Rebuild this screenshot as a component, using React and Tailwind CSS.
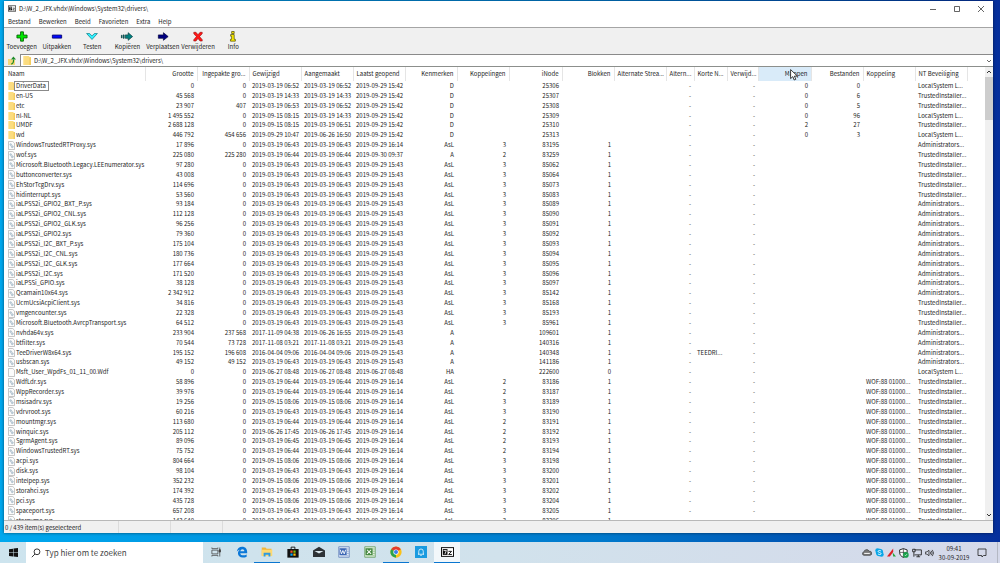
import React from "react";

const columns = [
  { label: "Naam", width: "w-[141px]", align: "text-left" },
  { label: "Grootte", width: "w-[52px]", align: "text-right" },
  { label: "Ingepakte gro...", width: "w-[52px]", align: "text-right" },
  { label: "Gewijzigd", width: "w-[52px]", align: "text-left" },
  { label: "Aangemaakt", width: "w-[52px]", align: "text-left" },
  { label: "Laatst geopend", width: "w-[52px]", align: "text-left" },
  { label: "Kenmerken", width: "w-[52px]", align: "text-right" },
  { label: "Koppelingen", width: "w-[52px]", align: "text-right" },
  { label: "iNode", width: "w-[53px]", align: "text-right" },
  { label: "Blokken", width: "w-[52px]", align: "text-right" },
  { label: "Alternate Strea...", width: "w-[52px]", align: "text-right" },
  { label: "Altern...", width: "w-[28px]", align: "text-right" },
  { label: "Korte N...", width: "w-[33px]", align: "text-left" },
  { label: "Verwijd...", width: "w-[31px]", align: "text-right" },
  { label: "Mappen", width: "w-[53px]", align: "text-right", hover: true },
  { label: "Bestanden", width: "w-[52px]", align: "text-right" },
  { label: "Koppeling", width: "w-[52px]", align: "text-left" },
  { label: "NT Beveiliging", width: "w-[52px]", align: "text-left" },
];

const L = "LocalSystem L...";
const T = "TrustedInstaller...";
const A = "Administrators...";
const W = "WOF:88 01000...";
const M43 = "2019-03-19 06:43";
const M44 = "2019-03-19 06:44";
const M45 = "2019-03-19 06:45";
const M52 = "2019-03-19 06:52";
const S06 = "2019-09-15 08:06";
const N42 = "2019-09-29 15:42";
const N43 = "2019-09-29 15:43";
const N14 = "2019-09-29 16:14";

const folder = (name, size, packed, mod, made, inode, dirs, files, nt) => ({
  kind: "folder",
  cells: [name, size, packed, mod, made, N42, "D", "", inode, "", "", "-", "", "-", dirs, files, "", nt],
});
const file = (name, size, packed, mod, made, seen, attr, links, inode, nt, extra = {}) => ({
  kind: extra.kind || "sys",
  cells: [name, size, packed, mod, made, seen, attr, links, inode, extra.blocks || "1", "", "-", extra.short || "", "-", "", "", extra.link || "", nt],
});
const wof = (name, size, date, links, inode) =>
  file(name, size, "0", date, date, N14, "AsL", links, inode, T, { link: W });
const drv = (name, size, inode, nt) => file(name, size, "0", M43, M43, N43, "AsL", "3", inode, nt);

const rows = [
  folder("DriverData", "0", "0", M52, M52, "25306", "0", "0", L),
  folder("en-US", "45 568", "0", "2019-03-19 14:33", "2019-03-19 14:33", "25307", "0", "6", T),
  folder("etc", "23 907", "407", "2019-03-19 06:53", M52, "25308", "0", "5", T),
  folder("nl-NL", "1 495 552", "0", "2019-09-15 08:15", "2019-03-19 14:33", "25309", "0", "96", L),
  folder("UMDF", "2 688 128", "0", "2019-09-15 08:15", "2019-03-19 06:51", "25310", "2", "27", T),
  folder("wd", "446 792", "454 656", "2019-09-29 10:47", "2019-06-26 16:50", "25313", "0", "3", L),
  file("WindowsTrustedRTProxy.sys", "17 896", "0", M43, M43, N14, "AsL", "3", "83195", A),
  file("wof.sys", "225 080", "225 280", M44, M44, "2019-09-30 09:37", "A", "2", "83259", T),
  drv("Microsoft.Bluetooth.Legacy.LEEnumerator.sys", "97 280", "85062", T),
  drv("buttonconverter.sys", "43 008", "85064", T),
  drv("EhStorTcgDrv.sys", "114 696", "85073", T),
  drv("hidinterrupt.sys", "53 560", "85083", T),
  drv("iaLPSS2i_GPIO2_BXT_P.sys", "93 184", "85089", A),
  drv("iaLPSS2i_GPIO2_CNL.sys", "112 128", "85090", A),
  drv("iaLPSS2i_GPIO2_GLK.sys", "96 256", "85091", A),
  drv("iaLPSS2i_GPIO2.sys", "79 360", "85092", A),
  drv("iaLPSS2i_I2C_BXT_P.sys", "175 104", "85093", A),
  drv("iaLPSS2i_I2C_CNL.sys", "180 736", "85094", A),
  drv("iaLPSS2i_I2C_GLK.sys", "177 664", "85095", A),
  drv("iaLPSS2i_I2C.sys", "171 520", "85096", A),
  drv("iaLPSSi_GPIO.sys", "38 128", "85097", A),
  drv("Qcamain10x64.sys", "2 342 912", "85142", A),
  drv("UcmUcsiAcpiClient.sys", "34 816", "85168", T),
  drv("vmgencounter.sys", "22 328", "85193", T),
  drv("Microsoft.Bluetooth.AvrcpTransport.sys", "64 512", "85961", T),
  file("nvhda64v.sys", "233 904", "237 568", "2017-11-09 04:38", "2019-06-26 16:55", N43, "A", "", "109601", A),
  file("btfilter.sys", "70 544", "73 728", "2017-11-08 03:21", "2017-11-08 03:21", N43, "A", "", "140316", A),
  file("TeeDriverW8x64.sys", "195 152", "196 608", "2016-04-04 09:06", "2016-04-04 09:06", N43, "A", "", "140348", A, { short: "TEEDRI..." }),
  file("usbscan.sys", "49 152", "49 152", M43, M43, N43, "A", "", "141186", A),
  file("Msft_User_WpdFs_01_11_00.Wdf", "0", "0", "2019-06-27 08:48", "2019-06-27 08:48", "2019-06-27 08:48", "HA", "", "222600", L, { kind: "plain", blocks: "0" }),
  wof("WdfLdr.sys", "58 896", M44, "2", "83186"),
  wof("WppRecorder.sys", "39 976", M44, "2", "83187"),
  wof("msisadrv.sys", "19 256", S06, "3", "83189"),
  wof("vdrvroot.sys", "60 216", M43, "3", "83190"),
  wof("mountmgr.sys", "113 680", M44, "2", "83191"),
  wof("winquic.sys", "205 112", "2019-06-26 17:45", "2", "83192"),
  wof("SgrmAgent.sys", "89 096", M45, "2", "83193"),
  wof("WindowsTrustedRT.sys", "75 752", M44, "2", "83194"),
  wof("acpi.sys", "804 664", S06, "3", "83198"),
  wof("disk.sys", "98 104", M43, "3", "83200"),
  wof("intelpep.sys", "352 232", S06, "3", "83201"),
  wof("storahci.sys", "174 392", M43, "3", "83202"),
  wof("pci.sys", "435 728", S06, "3", "83204"),
  wof("spaceport.sys", "657 208", M43, "3", "83205"),
  wof("stornvme.sys", "143 640", M43, "3", "83206"),
];

function Folder({ className = "h-2 w-[7px]" }) {
  return (
    <svg viewBox="0 0 7 8" className={`shrink-0 ${className}`} aria-hidden="true">
      <path d="M0 0h5.5v1H7v7H0z" fill="#fbdc7f" />
      <path d="M5.6 1H7v7H5.6z" fill="#f3cb5c" />
      <path d="M0 0h1v8H0z" fill="#ffe9a6" />
    </svg>
  );
}

function FileIcon({ gear }) {
  return (
    <svg viewBox="0 0 7 9" className="h-[9px] w-[7px] shrink-0" aria-hidden="true">
      <path d="M.5.5h4.300l1.700 1.700v6.300h-6z" fill="#fcfcfc" stroke="#a2a2a2" strokeWidth=".6" />
      {gear && (
        <g fill="#c3d3de" stroke="#9fb2c0" strokeWidth=".6">
          <circle cx="2.700" cy="3.600" r=".9" />
          <circle cx="4.300" cy="5.700" r="1" />
        </g>
      )}
    </svg>
  );
}

function SevenZip({ className }) {
  return (
    <svg viewBox="0 0 16 12" className={className} aria-hidden="true">
      <path d="M0 0h16v12H0z" fill="#111" />
      <path d="M1.200 1.200h13.600v9.600H1.200z" fill="#fff" />
      <path d="M2.200 2.400h5.800v7.200H2.200z" fill="#111" />
      <path d="M3.200 4.200h3.400L4.800 8.600" fill="none" stroke="#fff" strokeWidth="1" />
      <path d="M9.200 5.200h3.800L9.400 9H13.400" fill="none" stroke="#111" strokeWidth="1.200" />
    </svg>
  );
}

const tools = [
  ["Toevoegen", <path d="M6.300 1h3.400v3.800H14v3.400H9.700V12H6.300V8.200H2V4.800h4.300z" fill="#00e800" stroke="#075a07" />],
  ["Uitpakken", <path d="M2.500 4.800h11v3.600h-11z" fill="#0008ff" stroke="#00006a" />],
  ["Testen", <path d="M1.600 3h3.600L8 5.800 10.800 3h3.600L8 10z" fill="#30f0ff" stroke="#087880" strokeWidth=".8" />],
  ["Kopiëren", <g fill="#008080" stroke="#053c3c" strokeWidth=".8"><path d="M6 4.600h3.400V2l5.200 4.600L9.400 11V8.600H6z" /><path d="M3.400 4.600h1.200v4H3.400zM1.400 5h.6v3.200h-.6z" /></g>],
  ["Verplaatsen", <path d="M2.500 4.600h6V2l5.600 4.600L8.500 11V8.600h-6z" fill="#000080" stroke="#00003c" strokeWidth=".8" />],
  ["Verwijderen", <path d="M3 1.500h2.600L8 4.400l2.400-2.900H13v1.700L9.900 6.600l3.100 3.600v1.700h-2.600L8 8.900l-2.400 3H3v-1.700l3.100-3.600L3 3.200z" fill="#ff1818" stroke="#800" strokeWidth=".6" />],
  ["Info", <g fill="#fff000" stroke="#444000" strokeWidth=".8"><path d="M6.400.6h3V3h-3zM5.200 4.200h4.200v5.600h1.400v2.200H5v-2.200h1.400V6.200H5.200z" /></g>],
];

const taskIcons = [
  {
    name: "Taakweergave",
    art: (
      <g fill="none" stroke="#444" strokeWidth="1">
        <path d="M2.500 5.500h8v5h-8zM2.500 2v1.500h8V2M2.500 14v-1.500h8V14M13 2v12" />
        <path d="M12 5h2v3h-2z" fill="#444" />
      </g>
    ),
  },
  {
    name: "Edge",
    art: <path d="M1 7.600C1.500 3.500 4.400 1 8.200 1c4.200 0 6.700 3 6.700 7v1.500H5.700c.2 2 1.800 2.900 3.900 2.900 1.700 0 3.200-.4 4.600-1.200v3c-1.500.8-3.200 1.200-5.100 1.200-4 0-6.500-2.200-6.500-5.700 0-2 .9-3.600 2.600-4.700-1.900.4-3.200 1.300-4.200 2.600zM5.800 7h5.300c0-1.700-1-2.600-2.500-2.600S6.100 5.400 5.800 7z" fill="#0b78d8" />,
  },
  {
    name: "Verkenner",
    open: true,
    art: (
      <g>
        <path d="M1 2h5l1.500 1.500H14V13H1z" fill="#f0b73c" />
        <path d="M1 5h14v8.500H1z" fill="#ffd970" />
        <path d="M3.500 9h9v5H10v-2.500H6V14H3.500z" fill="#2f9ae0" />
      </g>
    ),
  },
  {
    name: "Store",
    art: (
      <g>
        <path d="M5.500 4V1.500h5V4" fill="none" stroke="#111" strokeWidth="1.200" />
        <path d="M.5 4h15v11.500H.5z" fill="#111" />
        <path d="M4.500 6h3v3h-3z" fill="#f35325" />
        <path d="M8.500 6h3v3h-3z" fill="#81bc06" />
        <path d="M4.500 10h3v3h-3z" fill="#05a6f0" />
        <path d="M8.500 10h3v3h-3z" fill="#ffba08" />
      </g>
    ),
  },
  {
    name: "Mail",
    art: (
      <g>
        <path d="M0 6l8-5 8 5v8.500H0z" fill="#2d3236" />
        <path d="M2 6.500h12L8 10z" fill="#dbe8ee" />
      </g>
    ),
  },
  {
    name: "Word",
    art: (
      <g>
        <path d="M1 1h14v14H1z" fill="#dfe9f8" stroke="#5b7ab5" />
        <path d="M12 4h2.500M12 7h2.500M12 10h2.500M3 13h11" stroke="#8aa4d0" />
        <path d="M2 3h9.500v9H2z" fill="#3c66b4" />
        <path d="M3 5l1.600 5.500L6.500 6l1.800 4.500L10.200 5" fill="none" stroke="#fff" strokeWidth="1.200" />
      </g>
    ),
  },
  {
    name: "Excel",
    art: (
      <g>
        <path d="M1 1h14v14H1z" fill="#e0f0dc" stroke="#5c9656" />
        <path d="M12 4h2.500M12 7h2.500M12 10h2.500M3 13h11" stroke="#8dbb86" />
        <path d="M2 3h9.500v9H2z" fill="#44883f" />
        <path d="M4 5l5.500 5.500M9.500 5L4 10.500" fill="none" stroke="#fff" strokeWidth="1.400" />
      </g>
    ),
  },
  {
    name: "Chrome",
    open: true,
    art: (
      <g>
        <circle cx="8" cy="8" r="7.500" fill="#fbc116" />
        <path d="M8 8L1.500 4.300A7.500 7.500 0 0 1 14.500 4.300z" fill="#e33b2e" />
        <path d="M8 8L1.500 4.300A7.500 7.500 0 0 0 8 15.500z" fill="#2ba24c" />
        <circle cx="8" cy="8" r="3.500" fill="#fff" />
        <circle cx="8" cy="8" r="2.700" fill="#3b7ded" />
      </g>
    ),
  },
  {
    name: "Meldingen",
    art: (
      <g>
        <path d="M0 0h16v16H0z" fill="#1a9be0" />
        <path d="M5 10.500V7a3 3 0 0 1 6 0v3.500l1 .5H4zM7 12.500h2" fill="none" stroke="#fff" />
      </g>
    ),
  },
];

function Tray() {
  return (
    <div className="flex items-center gap-[3px]">
      <svg viewBox="0 0 16 14" className="h-[9px] w-[10px]" aria-hidden="true">
        <path d="M3 11.500a2.800 2.800 0 0 1 0-5.500 4.500 4.500 0 0 1 8.500-1A3.300 3.300 0 0 1 13 11.500z" fill="#777" stroke="#333" />
        <path d="M3.500 8.500h9" stroke="#eee" strokeWidth="1.800" />
      </svg>
      <svg viewBox="0 0 16 16" className="h-[9px] w-[9px]" aria-hidden="true">
        <circle cx="8" cy="8" r="6.500" fill="#09a6e8" />
        <circle cx="4.500" cy="4.500" r="4" fill="#09a6e8" />
        <circle cx="11.500" cy="11.500" r="4" fill="#09a6e8" />
        <path d="M10.800 5.500C9.500 4 5.500 4 5.500 6.200S10.800 7.600 10.800 10 6.300 12 5.200 10.200" fill="none" stroke="#fff" strokeWidth="1.600" />
      </svg>
      <svg viewBox="0 0 16 16" className="h-[9px] w-[9px]" aria-hidden="true">
        <path d="M0 15L11 1v6L5 15z" fill="#e01f26" />
        <path d="M10 8l6 7h-5z" fill="#26a33c" />
      </svg>
      <svg viewBox="0 0 16 16" className="h-[10px] w-[10px]" aria-hidden="true">
        <path d="M7 1l6 2v4c0 4-2.500 6.500-6 8-3.500-1.500-6-4-6-8V3z" fill="#fff" stroke="#222" strokeWidth="1.500" />
        <path d="M7 1v14M1 7h12" stroke="#222" />
        <circle cx="11" cy="11" r="4.500" fill="#18a04a" />
        <path d="M9 11l1.500 1.500L13 9.500" fill="none" stroke="#fff" />
      </svg>
      <svg viewBox="0 0 16 16" className="h-[10px] w-[10px]" fill="none" stroke="#222" strokeWidth="1.400" aria-hidden="true">
        <path d="M4 3h11v8H4M7 14h6M10 11v3M1 2h4v4H1zM3 6v8" />
      </svg>
      <svg viewBox="0 0 16 16" className="h-[10px] w-[9px]" fill="none" stroke="#222" strokeWidth="1.300" aria-hidden="true">
        <path d="M1 6h2.500L7 3v10l-3.500-3H1zM9 5.500q2 2.500 0 5M11 4q3.500 4 0 8M13 2.500q4.500 5.500 0 11" />
      </svg>
    </div>
  );
}

export default function App() {
  return (
    <div className="flex h-screen flex-col overflow-hidden bg-gradient-to-r from-[#00a8ee] via-[#0079cc] via-60% to-[#062f9c] font-['Noto_Sans_CJK_JP','Open_Sans',sans-serif] text-[6px] leading-[8px] text-[#1c1c1c]">
      <div className="mt-px mr-[7px] mb-[9px] ml-1 flex min-h-0 flex-1 flex-col bg-white shadow-[0_0_3px_#0008]">
        <header className="flex h-[15px] shrink-0 items-center pl-1">
          <SevenZip className="h-[7px] w-2" />
          <h1 className="ml-[3px] flex-1">D:\W_2_JFX.vhdx\Windows\System32\drivers\</h1>
          <div className="flex h-full">
            <button aria-label="Minimaliseren" className="grid w-6 place-items-center">
              <svg viewBox="0 0 8 8" className="h-2 w-2" stroke="#222" strokeWidth=".7"><path d="M1 4.500h6" /></svg>
            </button>
            <button aria-label="Maximaliseren" className="grid w-6 place-items-center">
              <svg viewBox="0 0 8 8" className="h-2 w-2" fill="none" stroke="#222" strokeWidth=".7"><path d="M1.500 1.500h5v5h-5z" /></svg>
            </button>
            <button aria-label="Sluiten" className="grid w-6 place-items-center">
              <svg viewBox="0 0 8 8" className="h-2 w-2" stroke="#222" strokeWidth=".7"><path d="M1 1l6 6M7 1L1 7" /></svg>
            </button>
          </div>
        </header>

        <nav className="flex h-[11px] shrink-0 items-center gap-2 pl-1">
          {["Bestand", "Bewerken", "Beeld", "Favorieten", "Extra", "Help"].map((m) => (
            <button key={m}>{m}</button>
          ))}
        </nav>

        <div className="h-[27px] shrink-0 border-t border-[#a5a5a5] bg-[#f0f0f0]">
          <div className="flex h-full w-[247px]">
            {tools.map(([label, art]) => (
              <button key={label} className="flex flex-1 basis-0 flex-col items-center justify-center gap-px whitespace-nowrap">
                <svg viewBox="0 0 16 13" className="h-[11px] w-[14px]" aria-hidden="true">{art}</svg>
                <span>{label}</span>
              </button>
            ))}
          </div>
        </div>

        <div className="flex h-[13px] shrink-0 items-stretch border-b border-[#8c8f8c] bg-[#f0f0f0]">
          <button aria-label="Map omhoog" className="grid w-4 place-items-center">
            <svg viewBox="0 0 8 9" className="h-[9px] w-2">
              <path d="M0 3h3l1 1h3v5H0z" fill="#f5d878" />
              <path d="M3 8c2.500 0 2.600-2 2.600-4.500" fill="none" stroke="#1c8a24" strokeWidth="1.200" />
              <path d="M3 3.600L5.400.6 8 3.600z" fill="#1c8a24" />
            </svg>
          </button>
          <div className="flex flex-1 items-center border-t border-l border-[#8a8a8a] bg-white pl-[2px]">
            <Folder className="h-[9px] w-2" />
            <input aria-label="Pad" defaultValue="D:\W_2_JFX.vhdx\Windows\System32\drivers\" className="ml-[3px] h-[10px] flex-1 outline-none" />
            <button aria-label="Geschiedenis" className="grid w-2 place-items-center">
              <svg viewBox="0 0 6 6" className="h-[6px] w-[6px]" fill="none" stroke="#444" strokeWidth=".8"><path d="M1 2l2 2 2-2" /></svg>
            </button>
          </div>
        </div>

        <div className="flex min-h-0 flex-1">
          <div className="relative min-w-0 flex-1 overflow-hidden">
            <table className="h-[calc(100%+6px)] w-full table-fixed border-collapse">
              <colgroup>
                {columns.map((c) => (
                  <col key={c.label} className={c.width} />
                ))}
                <col />
              </colgroup>
              <thead>
                <tr className="h-[14px]">
                  {columns.map((c, i) => (
                    <th
                      key={c.label}
                      className={`border-r border-[#e5e5e5] p-0 font-normal whitespace-nowrap ${c.align} ${i === 0 ? "pl-1" : "px-[3px]"} ${c.hover ? "bg-[#d9ebf9]" : ""}`}
                    >
                      {c.label}
                    </th>
                  ))}
                  <th className="p-0" />
                </tr>
              </thead>
              <tbody>
                {rows.map((r, ri) => (
                  <tr key={r.cells[0]}>
                    {r.cells.map((v, i) =>
                      i === 0 ? (
                        <td key={i} className="p-0 pl-1">
                          <div className="flex h-[9px] items-center whitespace-nowrap">
                            {r.kind === "folder" ? <Folder /> : <FileIcon gear={r.kind === "sys"} />}
                            <span className={ri === 0 ? "pr-[2px] pl-px outline outline-[#8a8a8a]" : "pl-px"}>{v}</span>
                          </div>
                        </td>
                      ) : (
                        <td key={i} className={`p-0 px-[3px] whitespace-nowrap ${columns[i].align}`}>
                          {v}
                        </td>
                      )
                    )}
                    <td className="p-0" />
                  </tr>
                ))}
              </tbody>
            </table>
            <svg viewBox="0 0 8 12" className="absolute top-[2px] left-[786px] h-3 w-2" aria-hidden="true">
              <path d="M.6.6v9l2.200-2 1.400 3.400 1.600-.7-1.400-3.200h3z" fill="#fff" stroke="#111" strokeWidth=".8" />
            </svg>
          </div>
          <div className="flex w-2 flex-col items-center bg-[#f0f0f0]">
            <svg viewBox="0 0 6 6" className="my-[2px] h-[6px] w-[6px]" fill="none" stroke="#333"><path d="M1 4l2-2 2 2" /></svg>
            <div className="h-[43px] w-full bg-[#cdcdcd]" />
            <div className="flex-1" />
            <svg viewBox="0 0 6 6" className="my-[2px] h-[6px] w-[6px]" fill="none" stroke="#333"><path d="M1 2l2 2 2-2" /></svg>
          </div>
        </div>

        <footer className="flex h-[13px] shrink-0 items-stretch border-t border-[#b8b8b8] bg-[#f0f0f0]">
          <span className="w-[115px] border-r border-[#dcdcdc] pl-px leading-[14px]">0 / 439 item(s) geselecteerd</span>
          <span className="w-[52px] border-r border-[#dcdcdc]" />
          <span className="w-[52px] border-r border-[#dcdcdc]" />
        </footer>
      </div>

      <div className="flex h-[21px] shrink-0 items-stretch bg-gradient-to-r from-[#cde4ee] via-[#d1e2ec] to-[#d5d9ea]">
        <button aria-label="Start" className="grid w-[26px] place-items-center">
          <svg viewBox="0 0 9 9" className="h-[9px] w-[9px]" fill="#111"><path d="M0 1.200L4 .7v3.600H0zM4.500.6L9 0v4.300H4.500zM0 4.800h4v3.600l-4-.5zM4.500 4.800H9V9l-4.500-.6z" /></svg>
        </button>
        <label className="flex w-[177px] items-center bg-white">
          <svg viewBox="0 0 10 10" className="ml-[5px] h-[10px] w-[10px] shrink-0" fill="none" stroke="#222" strokeWidth=".9"><circle cx="6" cy="3.800" r="2.900" /><path d="M4 6L.8 9.200" /></svg>
          <input aria-label="Zoeken" placeholder="Typ hier om te zoeken" className="ml-1 w-full text-[8px] leading-[12px] outline-none placeholder:text-[#444]" />
        </label>
        <div className="flex flex-1 items-stretch">
          <div className="flex w-[257px]">
            {taskIcons.map((t) => (
              <button key={t.name} aria-label={t.name} className={`grid flex-1 basis-0 place-items-center border-b ${t.open ? "border-[#0a76d0]" : "border-transparent"}`}>
                <svg viewBox="0 0 16 16" className="h-3 w-3">{t.art}</svg>
              </button>
            ))}
            <button aria-label="7-Zip" className="grid flex-1 basis-0 place-items-center border-b border-[#0a76d0] bg-[#f2f7fa]">
              <SevenZip className="h-[10px] w-[13px]" />
            </button>
          </div>
        </div>
        <div className="flex items-center">
          <Tray />
          <time className="ml-1 w-[32px] text-center text-[6px] leading-[9px]">09:41<br />30-09-2019</time>
          <button aria-label="Actiecentrum" className="mr-[10px] ml-[7px]">
            <svg viewBox="0 0 10 10" className="h-[10px] w-[10px]" fill="none" stroke="#222" strokeWidth=".8"><path d="M1 1h8v6.500H6.500L5 9 4.800 7.500H1z" /></svg>
          </button>
          <span className="h-full w-[3px] border-l border-[#b4b8c4]" />
        </div>
      </div>
    </div>
  );
}
